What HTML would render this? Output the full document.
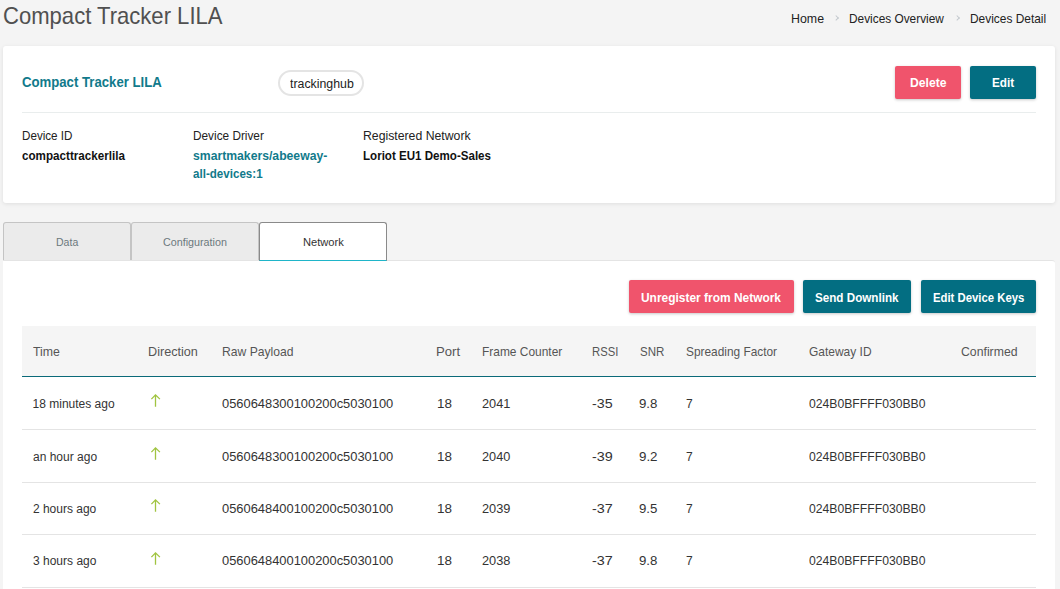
<!DOCTYPE html>
<html><head><meta charset="utf-8">
<style>
*{box-sizing:border-box;margin:0;padding:0}
html,body{width:1060px;height:589px;overflow:hidden;background:#f4f4f4;font-family:"Liberation Sans",sans-serif;color:#222}
.t{position:absolute;white-space:nowrap;line-height:1;transform-origin:0 0}
.chev{position:absolute;width:4.2px;height:4.2px;border-right:1px solid #c3c8ce;border-top:1px solid #c3c8ce;transform:rotate(45deg)}
.card{position:absolute;left:3px;top:46px;width:1052px;height:157px;background:#fff;border-radius:3px;box-shadow:0 1px 4px rgba(0,0,0,.09)}
.badge{position:absolute;left:278px;top:70px;width:86px;height:26px;border:2px solid #e4e4e4;border-radius:13px;background:#fff}
.btn{position:absolute;height:33px;border-radius:2px;box-shadow:0 1px 3px rgba(0,0,0,.22)}
.pink{background:#f0546c}
.teal{background:#036e82}
.sep{position:absolute;left:22px;top:112px;width:1014px;height:1px;background:#e9eded}
.tab{position:absolute;top:222px;width:128px;height:38px;background:#ebebeb;border:1px solid #c4c4c4;border-bottom:none;border-radius:3px 3px 0 0}
.tab.act{background:#fff;border-color:#8a8a8a;height:39px;border-bottom:1px solid #1fb5c9}
.panel{position:absolute;left:3px;top:260px;width:1052px;height:340px;background:#fff;border-top:1px solid #e4e4e4;border-radius:0 3px 0 0}
.thead{position:absolute;left:22px;top:326px;width:1014px;height:51px;background:#f5f5f5;border-bottom:1px solid #0a6a79}
.row{position:absolute;left:22px;width:1014px;height:1px;background:#e4e4e4}
.arr{position:absolute}
</style></head><body>
<div class="chev" style="left:833.5px;top:16px"></div>
<div class="chev" style="left:954.5px;top:16px"></div>
<div class="card"></div>
<div class="badge"></div>
<div class="btn pink" style="left:895px;top:66px;width:66px"></div>
<div class="btn teal" style="left:970px;top:66px;width:66px"></div>
<div class="sep"></div>
<div class="panel"></div>
<div class="tab" style="left:3px"></div>
<div class="tab" style="left:131px"></div>
<div class="tab act" style="left:259px"></div>
<div class="btn pink" style="left:629px;top:280px;width:165px"></div>
<div class="btn teal" style="left:803px;top:280px;width:108px"></div>
<div class="btn teal" style="left:921px;top:280px;width:115px"></div>
<div class="thead"></div>
<svg class="arr" style="left:145px;top:393.0px" width="20" height="16" viewBox="0 0 20 16"><path d="M10.5 1.6V13.8M6.4 6.1L10.5 1.8L14.9 6.1" fill="none" stroke="#a0c440" stroke-width="1.3"/></svg>
<div class="row" style="top:429.0px"></div>
<svg class="arr" style="left:145px;top:445.6px" width="20" height="16" viewBox="0 0 20 16"><path d="M10.5 1.6V13.8M6.4 6.1L10.5 1.8L14.9 6.1" fill="none" stroke="#a0c440" stroke-width="1.3"/></svg>
<div class="row" style="top:481.6px"></div>
<svg class="arr" style="left:145px;top:498.2px" width="20" height="16" viewBox="0 0 20 16"><path d="M10.5 1.6V13.8M6.4 6.1L10.5 1.8L14.9 6.1" fill="none" stroke="#a0c440" stroke-width="1.3"/></svg>
<div class="row" style="top:534.2px"></div>
<svg class="arr" style="left:145px;top:550.8px" width="20" height="16" viewBox="0 0 20 16"><path d="M10.5 1.6V13.8M6.4 6.1L10.5 1.8L14.9 6.1" fill="none" stroke="#a0c440" stroke-width="1.3"/></svg>
<div class="row" style="top:586.8px"></div>
<div class="t" style="left:3.40px;top:5px;font-size:23.6px;font-weight:400;color:#505050;transform:scaleX(0.9352);">Compact Tracker LILA</div>
<div class="t" style="left:791.01px;top:12px;font-size:13.2px;font-weight:400;color:#222;transform:scaleX(0.9388);">Home</div>
<div class="t" style="left:849.05px;top:12px;font-size:13.2px;font-weight:400;color:#222;transform:scaleX(0.8991);">Devices Overview</div>
<div class="t" style="left:970.05px;top:12px;font-size:13.2px;font-weight:400;color:#222;transform:scaleX(0.9030);">Devices Detail</div>
<div class="t" style="left:22.37px;top:75px;font-size:14.5px;font-weight:700;color:#117a8b;transform:scaleX(0.9080);">Compact Tracker LILA</div>
<div class="t" style="left:289.68px;top:78px;font-size:12px;font-weight:400;color:#222;transform:scaleX(1.0286);">trackinghub</div>
<div class="t" style="left:909.75px;top:76px;font-size:13px;font-weight:700;color:#fff;transform:scaleX(0.9363);">Delete</div>
<div class="t" style="left:992.08px;top:76px;font-size:13px;font-weight:700;color:#fff;transform:scaleX(0.9010);">Edit</div>
<div class="t" style="left:21.97px;top:129px;font-size:13px;font-weight:400;color:#222;transform:scaleX(0.8953);">Device ID</div>
<div class="t" style="left:192.56px;top:129px;font-size:13px;font-weight:400;color:#222;transform:scaleX(0.9085);">Device Driver</div>
<div class="t" style="left:363.02px;top:129px;font-size:13px;font-weight:400;color:#222;transform:scaleX(0.9425);">Registered Network</div>
<div class="t" style="left:21.53px;top:150px;font-size:12.6px;font-weight:700;color:#111;transform:scaleX(0.9252);">compacttrackerlila</div>
<div class="t" style="left:192.51px;top:150px;font-size:12.6px;font-weight:700;color:#117a8b;transform:scaleX(0.9686);">smartmakers/abeeway-</div>
<div class="t" style="left:192.65px;top:168px;font-size:12.6px;font-weight:700;color:#117a8b;transform:scaleX(0.9204);">all-devices:1</div>
<div class="t" style="left:362.69px;top:150px;font-size:12.6px;font-weight:700;color:#111;transform:scaleX(0.9190);">Loriot EU1 Demo-Sales</div>
<div class="t" style="left:55.56px;top:237px;font-size:11.2px;font-weight:400;color:#6b797d;transform:scaleX(0.9412);">Data</div>
<div class="t" style="left:163.16px;top:237px;font-size:11.2px;font-weight:400;color:#6b797d;transform:scaleX(0.9602);">Configuration</div>
<div class="t" style="left:302.51px;top:237px;font-size:11.2px;font-weight:400;color:#333;transform:scaleX(0.9948);">Network</div>
<div class="t" style="left:641.28px;top:291px;font-size:13.6px;font-weight:700;color:#fff;transform:scaleX(0.8784);">Unregister from Network</div>
<div class="t" style="left:815.45px;top:291px;font-size:13.6px;font-weight:700;color:#fff;transform:scaleX(0.8570);">Send Downlink</div>
<div class="t" style="left:932.81px;top:291px;font-size:13.6px;font-weight:700;color:#fff;transform:scaleX(0.8333);">Edit Device Keys</div>
<div class="t" style="left:32.85px;top:346px;font-size:12.9px;font-weight:400;color:#555;transform:scaleX(0.9544);">Time</div>
<div class="t" style="left:147.59px;top:346px;font-size:12.9px;font-weight:400;color:#555;transform:scaleX(0.9812);">Direction</div>
<div class="t" style="left:221.63px;top:346px;font-size:12.9px;font-weight:400;color:#555;transform:scaleX(0.9424);">Raw Payload</div>
<div class="t" style="left:436.45px;top:346px;font-size:12.9px;font-weight:400;color:#555;transform:scaleX(1.0188);">Port</div>
<div class="t" style="left:481.84px;top:346px;font-size:12.9px;font-weight:400;color:#555;transform:scaleX(0.9260);">Frame Counter</div>
<div class="t" style="left:592.30px;top:346px;font-size:12.9px;font-weight:400;color:#555;transform:scaleX(0.8757);">RSSI</div>
<div class="t" style="left:639.62px;top:346px;font-size:12.9px;font-weight:400;color:#555;transform:scaleX(0.8948);">SNR</div>
<div class="t" style="left:686.01px;top:346px;font-size:12.9px;font-weight:400;color:#555;transform:scaleX(0.9209);">Spreading Factor</div>
<div class="t" style="left:808.90px;top:346px;font-size:12.9px;font-weight:400;color:#555;transform:scaleX(0.9293);">Gateway ID</div>
<div class="t" style="left:960.89px;top:346px;font-size:12.9px;font-weight:400;color:#555;transform:scaleX(0.9509);">Confirmed</div>
<div class="t" style="left:32.54px;top:398px;font-size:12px;font-weight:400;color:#333;">18 minutes ago</div>
<div class="t" style="left:222.08px;top:398px;font-size:12.6px;font-weight:400;color:#333;transform:scaleX(1.0232);">0560648300100200c5030100</div>
<div class="t" style="left:437.33px;top:398px;font-size:12px;font-weight:400;color:#333;transform:scaleX(1.1195);">18</div>
<div class="t" style="left:482.16px;top:398px;font-size:12px;font-weight:400;color:#333;transform:scaleX(1.0642);">2041</div>
<div class="t" style="left:592.43px;top:398px;font-size:12px;font-weight:400;color:#333;transform:scaleX(1.1861);">-35</div>
<div class="t" style="left:639.34px;top:398px;font-size:12px;font-weight:400;color:#333;transform:scaleX(1.1026);">9.8</div>
<div class="t" style="left:686.00px;top:398px;font-size:12px;font-weight:400;color:#333;">7</div>
<div class="t" style="left:809.01px;top:398px;font-size:12px;font-weight:400;color:#333;transform:scaleX(1.0153);">024B0BFFFF030BB0</div>
<div class="t" style="left:33.02px;top:451px;font-size:12px;font-weight:400;color:#333;">an hour ago</div>
<div class="t" style="left:222.08px;top:451px;font-size:12.6px;font-weight:400;color:#333;transform:scaleX(1.0232);">0560648300100200c5030100</div>
<div class="t" style="left:437.33px;top:451px;font-size:12px;font-weight:400;color:#333;transform:scaleX(1.1195);">18</div>
<div class="t" style="left:482.16px;top:451px;font-size:12px;font-weight:400;color:#333;transform:scaleX(1.0592);">2040</div>
<div class="t" style="left:592.43px;top:451px;font-size:12px;font-weight:400;color:#333;transform:scaleX(1.1949);">-39</div>
<div class="t" style="left:639.33px;top:451px;font-size:12px;font-weight:400;color:#333;transform:scaleX(1.1111);">9.2</div>
<div class="t" style="left:686.00px;top:451px;font-size:12px;font-weight:400;color:#333;">7</div>
<div class="t" style="left:809.01px;top:451px;font-size:12px;font-weight:400;color:#333;transform:scaleX(1.0153);">024B0BFFFF030BB0</div>
<div class="t" style="left:32.90px;top:503px;font-size:12px;font-weight:400;color:#333;">2 hours ago</div>
<div class="t" style="left:222.08px;top:503px;font-size:12.6px;font-weight:400;color:#333;transform:scaleX(1.0232);">0560648400100200c5030100</div>
<div class="t" style="left:437.33px;top:503px;font-size:12px;font-weight:400;color:#333;transform:scaleX(1.1195);">18</div>
<div class="t" style="left:482.16px;top:503px;font-size:12px;font-weight:400;color:#333;transform:scaleX(1.0642);">2039</div>
<div class="t" style="left:592.43px;top:503px;font-size:12px;font-weight:400;color:#333;transform:scaleX(1.1949);">-37</div>
<div class="t" style="left:639.34px;top:503px;font-size:12px;font-weight:400;color:#333;transform:scaleX(1.1026);">9.5</div>
<div class="t" style="left:686.00px;top:503px;font-size:12px;font-weight:400;color:#333;">7</div>
<div class="t" style="left:809.01px;top:503px;font-size:12px;font-weight:400;color:#333;transform:scaleX(1.0153);">024B0BFFFF030BB0</div>
<div class="t" style="left:33.02px;top:555px;font-size:12px;font-weight:400;color:#333;">3 hours ago</div>
<div class="t" style="left:222.08px;top:555px;font-size:12.6px;font-weight:400;color:#333;transform:scaleX(1.0232);">0560648400100200c5030100</div>
<div class="t" style="left:437.33px;top:555px;font-size:12px;font-weight:400;color:#333;transform:scaleX(1.1195);">18</div>
<div class="t" style="left:482.16px;top:555px;font-size:12px;font-weight:400;color:#333;transform:scaleX(1.0642);">2038</div>
<div class="t" style="left:592.43px;top:555px;font-size:12px;font-weight:400;color:#333;transform:scaleX(1.1949);">-37</div>
<div class="t" style="left:639.34px;top:555px;font-size:12px;font-weight:400;color:#333;transform:scaleX(1.1026);">9.8</div>
<div class="t" style="left:686.00px;top:555px;font-size:12px;font-weight:400;color:#333;">7</div>
<div class="t" style="left:809.01px;top:555px;font-size:12px;font-weight:400;color:#333;transform:scaleX(1.0153);">024B0BFFFF030BB0</div>
</body></html>
